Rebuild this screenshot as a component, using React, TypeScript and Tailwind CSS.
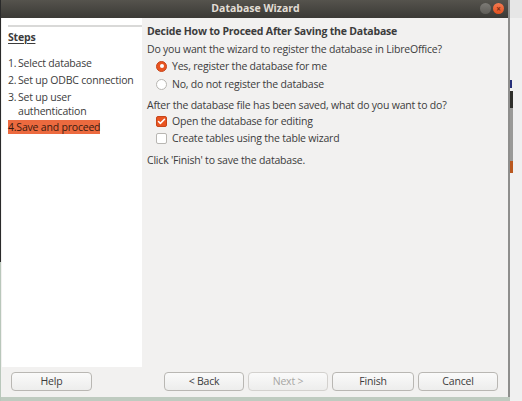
import { Check } from "lucide-react";

const font = { fontFamily: '"Open Sans", "DejaVu Sans", sans-serif' };

function Radio({ checked, label }: { checked?: boolean; label: string }) {
  return (
    <div className="flex items-center h-[14px] pl-[9px]">
      {checked ? (
        <span className="w-[11px] h-[11px] rounded-full bg-[#e95420] border border-[#c7461a] flex items-center justify-center">
          <span className="w-[4px] h-[4px] rounded-full bg-white" />
        </span>
      ) : (
        <span className="w-[11px] h-[11px] rounded-full bg-white border border-[#b8b6b2]" />
      )}
      <span className="ml-[5px]">{label}</span>
    </div>
  );
}

function CheckBox({ checked, label }: { checked?: boolean; label: string }) {
  return (
    <div className="flex items-center h-[14px] pl-[9px]">
      {checked ? (
        <span className="w-[11px] h-[11px] rounded-[2px] bg-[#e95420] border border-[#c7461a] flex items-center justify-center">
          <Check className="w-[9px] h-[9px] text-white" strokeWidth={4} />
        </span>
      ) : (
        <span className="w-[11px] h-[11px] rounded-[2px] bg-white border border-[#b8b6b2]" />
      )}
      <span className="ml-[5px]">{label}</span>
    </div>
  );
}

function Btn({ label, disabled, w = "w-[80px]" }: { label: string; disabled?: boolean; w?: string }) {
  return (
    <div
      className={`${w} h-[19px] rounded-[4px] border flex items-center justify-center bg-gradient-to-b from-[#fafafa] to-[#ededec] ${
        disabled ? "border-[#d3d1ce] text-[#a7a6a3]" : "border-[#b9b7b3] text-[#3c3c3c]"
      }`}
    >
      {label}
    </div>
  );
}

export default function App() {
  return (
    <div
      className="w-[522px] h-[401px] flex overflow-hidden bg-[#bfcbc0] text-[10.5px] tracking-[-0.2px] text-[#3c3c3c]"
      style={font}
    >
      {/* left backdrop strip */}
      <div className="w-[1px] h-full flex flex-col">
        <div className="h-[262px] bg-[#2a2a2a]" />
        <div className="flex-1 bg-[#b9c7bb]" />
      </div>

      {/* window */}
      <div className="w-[509px] h-[397px] flex flex-col bg-[#f2f1f0] border-r-2 border-[#8e8e8c]">
        {/* title bar */}
        <div className="h-[18px] flex items-center bg-gradient-to-b from-[#55534d] to-[#3b3a36] relative">
          <div className="flex-1 text-center text-[10.5px] tracking-normal font-bold text-[#e2ded6] pl-[2px]">
            Database Wizard
          </div>
          <div className="absolute right-[4px] top-[3px] flex gap-[2px]">
            <span className="w-[11px] h-[11px] rounded-full bg-gradient-to-b from-[#7d7b76] to-[#5f5d58]" />
            <span className="w-[11px] h-[11px] rounded-full bg-gradient-to-b from-[#f47a50] to-[#e2501c] flex items-center justify-center text-[8px] leading-none text-[#7a2a10] font-bold">
              ×
            </span>
          </div>
        </div>

        <div className="flex flex-1 min-h-0">
          {/* sidebar */}
          <div className="w-[140px] ml-[1px] bg-white h-[349px] pl-[6px] leading-[14px] whitespace-nowrap">
            <div className="mt-[7px] h-[2px] bg-[#d9d9d8]" />
            <div className="mt-[3px] font-bold underline underline-offset-2">Steps</div>
            <div className="mt-[12px] flex">
              <span className="w-[10px]">1.</span>
              <span>Select database</span>
            </div>
            <div className="mt-[3px] flex">
              <span className="w-[10px]">2.</span>
              <span>Set up ODBC connection</span>
            </div>
            <div className="mt-[3px] flex">
              <span className="w-[10px]">3.</span>
              <span>
                Set up user
                <br />
                authentication
              </span>
            </div>
            <div className="mt-[2px] w-[92px] h-[14px] bg-[#ec6a3f] text-[#3a1a10]">4.Save and proceed</div>
          </div>

          {/* main */}
          <div className="flex-1 pl-[5px] leading-[14px]">
            <div className="mt-[6px] font-bold">Decide How to Proceed After Saving the Database</div>
            <div className="mt-[4px]">Do you want the wizard to register the database in LibreOffice?</div>
            <div className="mt-[3px]">
              <Radio checked label="Yes, register the database for me" />
            </div>
            <div className="mt-[4px]">
              <Radio label="No, do not register the database" />
            </div>
            <div className="mt-[7px]">After the database file has been saved, what do you want to do?</div>
            <div className="mt-[2px]">
              <CheckBox checked label="Open the database for editing" />
            </div>
            <div className="mt-[3px]">
              <CheckBox label="Create tables using the table wizard" />
            </div>
            <div className="mt-[8px]">Click 'Finish' to save the database.</div>
          </div>
        </div>

        {/* footer */}
        <div className="h-[30px] flex items-start pt-[5px] pl-[10px]">
          <Btn label="Help" w="w-[81px]" />
          <div className="ml-[72px] flex gap-[4px]">
            <Btn label="< Back" />
            <Btn label="Next >" disabled />
            <Btn label="Finish" w="w-[82px]" />
            <Btn label="Cancel" />
          </div>
        </div>
      </div>

      {/* right backdrop strip */}
      <div className="flex-1 h-full flex flex-col bg-[#f0f0f0]">
        <div className="h-[18px] bg-[#e6e6e6]" />
        <div className="h-[62px]" />
        <div className="w-[2px] h-[8px] bg-[#27307a]" />
        <div className="h-[3px]" />
        <div className="w-[3px] h-[17px] bg-[#2e2e2a]" />
        <div className="w-[3px] h-[53px] bg-[#9a9a98]" />
        <div className="w-[3px] h-[12px] bg-[#b9581f]" />
        <div className="flex-1" />
      </div>
    </div>
  );
}
